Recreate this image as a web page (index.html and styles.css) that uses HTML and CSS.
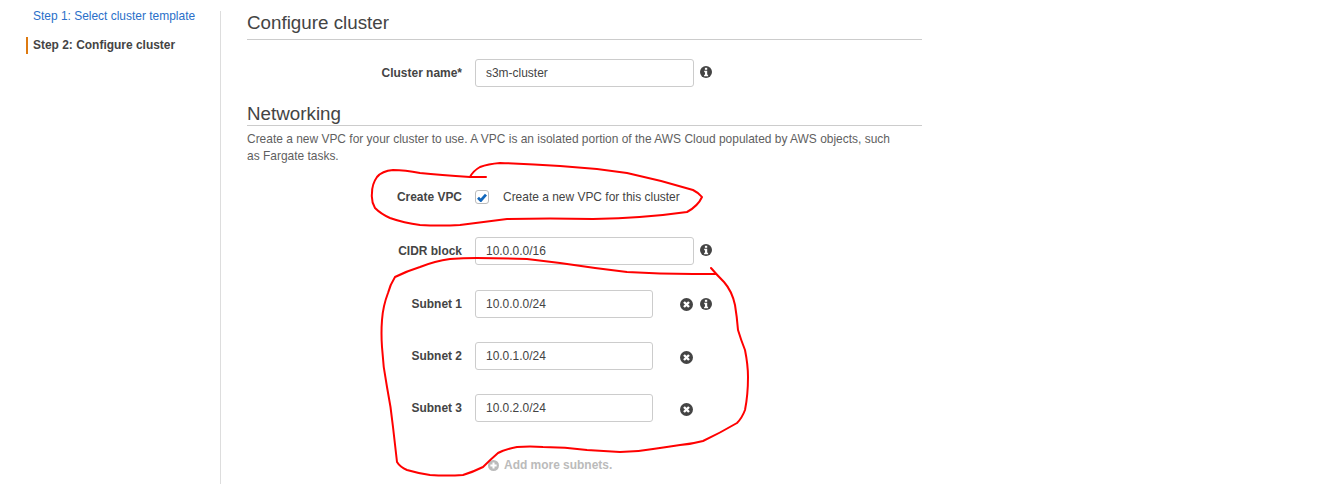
FILE: index.html
```html
<!DOCTYPE html>
<html lang="en">
<head>
<meta charset="utf-8">
<title>Configure cluster</title>
<link rel="stylesheet" href="styles.css">
</head>
<body>
<svg class="defs" aria-hidden="true">
  <symbol id="i-info" viewBox="0 0 12 12">
    <circle cx="6" cy="6" r="6" fill="#444"/>
    <rect x="4.9" y="1.8" width="2.3" height="2" fill="#fff"/>
    <path d="M4.2 4.8h3v3.9h.9v1.5H4.1V8.7H5V6.3h-.8z" fill="#fff"/>
  </symbol>
  <symbol id="i-remove" viewBox="0 0 13 13">
    <circle cx="6.5" cy="6.5" r="6.5" fill="#444"/>
    <path d="M4 4l5 5M9 4L4 9" stroke="#fff" stroke-width="2.4"/>
  </symbol>
  <symbol id="i-add" viewBox="0 0 12 12">
    <circle cx="6" cy="6" r="6" fill="#bbb"/>
    <path d="M6 2.6v6.8M2.6 6h6.8" stroke="#fff" stroke-width="2.2"/>
  </symbol>
</svg>

<div class="page">
  <nav class="steps">
    <a class="step step-link" href="#">Step 1: Select cluster template</a>
    <div class="step step-current">Step 2: Configure cluster</div>
  </nav>

  <main class="content">
    <h2 class="heading">Configure cluster</h2>
    <div class="row row-name">
      <label class="label">Cluster name*</label>
      <input class="field field-wide" value="s3m-cluster">
      <svg class="icon icon-info"><use href="#i-info"/></svg>
    </div>

    <h2 class="heading heading-net">Networking</h2>
    <p class="desc">Create a new VPC for your cluster to use. A VPC is an isolated portion of the AWS Cloud populated by AWS objects, such as Fargate tasks.</p>

    <div class="row row-vpc">
      <label class="label">Create VPC</label>
      <span class="check"><svg class="tick" viewBox="0 0 10 9"><path d="M1 4.8l2.8 2.7L9 1.6" fill="none" stroke="#1166bb" stroke-width="2.8"/></svg></span>
      <span class="check-text">Create a new VPC for this cluster</span>
    </div>

    <div class="row row-cidr">
      <label class="label">CIDR block</label>
      <input class="field field-wide" value="10.0.0.0/16">
      <svg class="icon icon-info"><use href="#i-info"/></svg>
    </div>

    <div class="row row-subnet-first">
      <label class="label">Subnet 1</label>
      <input class="field field-short" value="10.0.0.0/24">
      <svg class="icon icon-remove"><use href="#i-remove"/></svg>
      <svg class="icon icon-info icon-info-after"><use href="#i-info"/></svg>
    </div>
    <div class="row row-subnet">
      <label class="label">Subnet 2</label>
      <input class="field field-short" value="10.0.1.0/24">
      <svg class="icon icon-remove icon-low"><use href="#i-remove"/></svg>
    </div>
    <div class="row row-subnet">
      <label class="label">Subnet 3</label>
      <input class="field field-short" value="10.0.2.0/24">
      <svg class="icon icon-remove icon-low"><use href="#i-remove"/></svg>
    </div>

    <div class="add-more">
      <svg class="icon icon-add"><use href="#i-add"/></svg>
      <span>Add more subnets.</span>
    </div>
  </main>
</div>

<svg class="scribble" viewBox="0 0 1339 484" aria-hidden="true">
  <path d="M486 177L470 177Q440 175 420 173Q405 170 393 170Q382 171 377 177Q372 184 372 193Q371 201 375 208Q381 214 390 218Q404 223 420 225Q440 226 460 225Q484 222 507 219Q550 218 593 219Q645 218 687 212Q698 206 702 197Q699 193 693 190Q660 180 627 173Q594 168 560 166Q530 164 500 163Q488 164 480 167Q473 171 470 177"/>
  <path d="M711 268Q717 275 724 282Q732 291 735 305Q737 317 738 330Q741 340 745 350Q748 365 748 377Q748 395 745 410Q742 418 737 423Q720 433 703 441Q692 444 680 445Q667 447 653 449Q637 452 620 452Q603 451 587 450Q565 447 543 447Q530 446 517 447Q506 449 498 453Q490 460 483 467Q473 472 463 475Q447 476 430 475Q417 473 407 470Q400 467 397 462Q395 445 393 427Q391 407 387 387Q383 367 382 347Q381 333 382 320Q383 306 388 293Q390 285 395 277Q407 271 420 267Q435 261 450 259Q463 258 477 258Q502 258 527 259Q544 261 560 263Q593 268 627 272Q660 274 693 274L716 274"/>
</svg>
</body>
</html>
```

FILE: styles.css
```css
* {
  box-sizing: border-box;
}

html,
body {
  height: 100%;
}

body {
  position: relative;
  margin: 0;
  overflow: hidden;
  background: #fff;
  color: #444;
  font-family: "Liberation Sans", Arial, sans-serif;
  font-size: 11.96px;
  line-height: 17px;
}

.defs {
  position: absolute;
  width: 0;
  height: 0;
}

.page {
  display: flex;
  height: 100%;
  padding-top: 11px;
}

.steps {
  flex: none;
  width: 221px;
  padding-left: 26px;
  border-right: 1px solid #ddd;
}

.step {
  display: block;
  height: 17px;
  line-height: 17px;
}

.step-link {
  margin-top: -3px;
  padding-left: 7px;
  color: #2a6fc9;
  text-decoration: none;
}

.step-current {
  margin-top: 12px;
  padding-left: 5px;
  border-left: 2px solid #dd7a11;
  font-weight: bold;
}

.content {
  flex: none;
  width: 675px;
  margin-left: 26px;
}

.heading {
  height: 29px;
  margin: 0;
  border-bottom: 1px solid #ccc;
  font-size: 18.8px;
  font-weight: normal;
  line-height: 23px;
}

.heading-net {
  height: 26px;
  margin-top: 13px;
  line-height: 27px;
}

.desc {
  width: 655px;
  margin: 5px 0 0;
  color: #5f5f5f;
}

.row {
  display: flex;
  align-items: center;
  height: 28px;
}

.row-name {
  margin-top: 19px;
}

.row-vpc {
  margin-top: 18px;
}

.row-cidr {
  margin-top: 26px;
}

.row-subnet-first {
  margin-top: 25px;
}

.row-subnet {
  margin-top: 24px;
}

.label {
  flex: none;
  width: 215px;
  margin-right: 13px;
  font-weight: bold;
  text-align: right;
}

.field {
  height: 28px;
  padding: 0 10px;
  border: 1px solid #ccc;
  border-radius: 3px;
  outline: 0;
  background: #fff;
  color: #444;
  font: 11.96px "Liberation Sans", Arial, sans-serif;
}

.field-wide {
  width: 219px;
}

.field-short {
  width: 178px;
}

.icon {
  display: block;
  flex: none;
}

.icon-info {
  width: 12px;
  height: 12px;
  margin-top: -3px;
  margin-left: 6px;
}

.icon-remove {
  width: 13px;
  height: 13px;
  margin-top: 1px;
  margin-left: 27px;
}

.icon-low {
  margin-top: 3px;
}

.icon-info-after {
  margin-top: -1px;
  margin-left: 7px;
}

.check {
  display: flex;
  flex: none;
  align-items: center;
  justify-content: center;
  width: 14px;
  height: 14px;
  border: 1px solid #bbb;
  border-radius: 3px;
}

.tick {
  width: 10px;
  height: 9px;
}

.check-text {
  margin-left: 14px;
}

.add-more {
  display: flex;
  align-items: center;
  height: 17px;
  margin-top: 35px;
  margin-left: 241px;
  color: #bbb;
  font-weight: bold;
}

.icon-add {
  width: 11px;
  height: 11px;
  margin-right: 5px;
}

.scribble {
  position: absolute;
  top: 0;
  left: 0;
  width: 1339px;
  height: 484px;
  pointer-events: none;
}

.scribble path {
  fill: none;
  stroke: #f00;
  stroke-width: 2;
  stroke-linecap: round;
  stroke-linejoin: round;
}
```
